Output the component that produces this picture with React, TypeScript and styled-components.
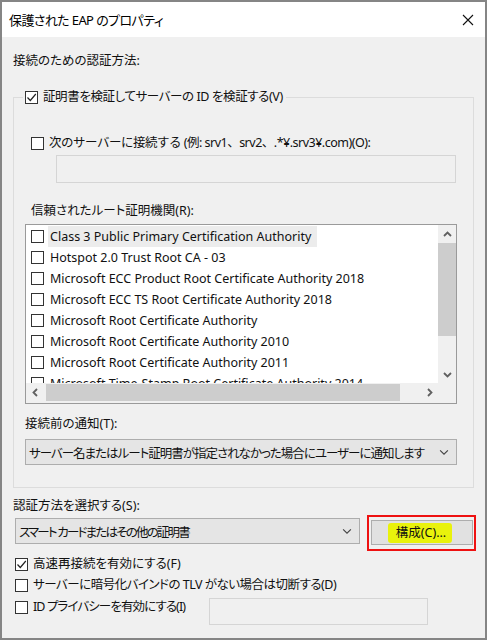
import React from "react";
import styled, { createGlobalStyle } from "styled-components";

const GlobalStyle = createGlobalStyle`
  html, body { margin: 0; padding: 0; background: #f0f0f0; }
  * { box-sizing: border-box; }
  body {
    font-family: "Noto Sans", "Noto Sans CJK JP", sans-serif;
    font-size: 12.5px;
    font-feature-settings: "palt";
    color: #111;
  }
`;

const Window = styled.div`
  width: 487px;
  height: 640px;
  border: 2px solid #858585;
  background: #f0f0f0;
  display: flex;
  flex-direction: column;
`;

const TitleBar = styled.div`
  height: 35px;
  background: #fff;
  display: flex;
  align-items: center;
  justify-content: space-between;
  padding: 0 11px 0 7px;
  font-size: 13px;
  color: #000;
`;

const CloseButton = styled.span`
  display: flex;
  width: 12px;
  height: 12px;
`;

const Text = styled.span<{ $ls?: number; $fullWidth?: boolean }>`
  letter-spacing: ${(p) => p.$ls ?? 0}px;
  white-space: nowrap;
  ${(p) => (p.$fullWidth ? "font-feature-settings: normal;" : "")}
`;

const Body = styled.div`
  flex: 1;
  padding: 0 11px;
  display: flex;
  flex-direction: column;
`;

const Label = styled.div<{ $mt: number; $ml?: number }>`
  line-height: 18px;
  height: 18px;
  margin-top: ${(p) => p.$mt}px;
  margin-left: ${(p) => p.$ml ?? 0}px;
  white-space: nowrap;
`;

const GroupBox = styled.fieldset`
  margin: 18px 0 0 0;
  padding: 0 16px 22px 11px;
  border: 1px solid #dcdcdc;
  min-width: 0;
  display: flex;
  flex-direction: column;
`;

const Legend = styled.legend`
  padding: 0 3px 0 2px;
  margin-left: -2px;
  line-height: 18px;
  height: 18px;
`;

const CheckRow = styled.label<{ $mt?: number; $ml?: number }>`
  display: flex;
  align-items: center;
  gap: 5px;
  line-height: 18px;
  height: 18px;
  margin-top: ${(p) => p.$mt ?? 0}px;
  margin-left: ${(p) => p.$ml ?? 0}px;
  white-space: nowrap;
`;

const Box = styled.span`
  width: 13px;
  height: 13px;
  flex: none;
  border: 1px solid #333;
  background: #fff;
  display: flex;
  align-items: center;
  justify-content: center;
`;

const TextField = styled.div<{ $w: number; $h: number; $mt?: number; $ml?: number }>`
  width: ${(p) => p.$w}px;
  height: ${(p) => p.$h}px;
  margin-top: ${(p) => p.$mt ?? 0}px;
  margin-left: ${(p) => p.$ml ?? 0}px;
  border: 1px solid #d5d5d5;
  background: #f0f0f0;
  flex: none;
`;

const ListBox = styled.div`
  margin-top: 4px;
  height: 180px;
  border: 1px solid #9a9a9a;
  background: #fff;
  display: grid;
  grid-template-columns: 1fr 18px;
  grid-template-rows: 1fr 20px;
  overflow: hidden;
`;

const ListItems = styled.div`
  padding-top: 1px;
  overflow: hidden;
  display: flex;
  flex-direction: column;
`;

const ListRow = styled.div`
  height: 21px;
  display: flex;
  align-items: center;
  padding-left: 5px;
  gap: 4px;
  white-space: nowrap;
  flex: none;
`;

const ItemText = styled.span<{ $focus?: boolean }>`
  padding: 0 2px;
  line-height: 21px;
  background: ${(p) => (p.$focus ? "#ececec" : "transparent")};
  padding-right: ${(p) => (p.$focus ? 6 : 2)}px;
`;

const VScroll = styled.div`
  background: #f0f0f0;
  display: flex;
  flex-direction: column;
  align-items: stretch;
`;

const Arrow = styled.div<{ $size: number }>`
  height: ${(p) => p.$size}px;
  width: ${(p) => p.$size}px;
  display: flex;
  align-items: center;
  justify-content: center;
  flex: none;
`;

const VThumb = styled.div`
  height: 93px;
  background: #cdcdcd;
`;

const Spacer = styled.div`
  flex: 1;
`;

const HScroll = styled.div`
  background: #f0f0f0;
  display: flex;
  align-items: stretch;
`;

const HThumb = styled.div`
  width: 354px;
  margin: 1px 0 2px 2px;
  background: #cdcdcd;
`;

const Corner = styled.div`
  background: #f0f0f0;
`;

const Dropdown = styled.div<{ $w?: number; $h: number; $mt?: number; $ml?: number }>`
  ${(p) => (p.$w ? `width: ${p.$w}px;` : "")}
  height: ${(p) => p.$h}px;
  margin-top: ${(p) => p.$mt ?? 0}px;
  margin-left: ${(p) => p.$ml ?? 0}px;
  border: 1px solid #adadad;
  background: #e5e5e5;
  display: flex;
  align-items: center;
  justify-content: space-between;
  gap: 4px;
  padding: 0 7px 0 3px;
  white-space: nowrap;
  overflow: hidden;
  flex: none;
`;

const MethodRow = styled.div`
  display: flex;
  align-items: flex-start;
  gap: 7px;
  margin-left: 2px;
`;

const RedFrame = styled.div`
  border: 2px solid #ee1111;
  padding: 3px 1px 4px 2px;
`;

const Button = styled.div`
  width: 102px;
  height: 25px;
  border: 1px solid #adadad;
  background: #e1e1e1;
  display: flex;
  align-items: center;
  justify-content: center;
`;

const Marker = styled.span`
  background: #e9f20c;
  padding: 1px 6px 1px 8px;
  margin-right: 4px;
  border-radius: 3px;
  line-height: 18px;
`;

const PrivacyRow = styled.div`
  display: grid;
  grid-template-columns: 194px 219px;
  align-items: start;
  margin-top: 4px;
  margin-left: 2px;
`;

const Check = () => (
  <svg width="11" height="11" viewBox="0 0 11 11">
    <path d="M1.5 5.5 L4.3 8.5 L9.8 2" fill="none" stroke="#222" strokeWidth="1.2" />
  </svg>
);

const CheckBox = ({ checked }: { checked?: boolean }) => <Box>{checked ? <Check /> : null}</Box>;

const Chevron = ({ dir, size = 9, w = 1.6, color = "#555" }: { dir: "up" | "down" | "left" | "right"; size?: number; w?: number; color?: string }) => {
  const paths: Record<string, string> = {
    down: "M1 3 L4.5 6.5 L8 3",
    up: "M1 6 L4.5 2.5 L8 6",
    left: "M6 1 L2.5 4.5 L6 8",
    right: "M3 1 L6.5 4.5 L3 8",
  };
  return (
    <svg width={size} height={size} viewBox="0 0 9 9" style={{ flex: "none" }}>
      <path d={paths[dir]} fill="none" stroke={color} strokeWidth={w} />
    </svg>
  );
};

const certs = [
  "Class 3 Public Primary Certification Authority",
  "Hotspot 2.0 Trust Root CA - 03",
  "Microsoft ECC Product Root Certificate Authority 2018",
  "Microsoft ECC TS Root Certificate Authority 2018",
  "Microsoft Root Certificate Authority",
  "Microsoft Root Certificate Authority 2010",
  "Microsoft Root Certificate Authority 2011",
  "Microsoft Time-Stamp Root Certificate Authority 2014",
];

export default function App() {
  return (
    <>
      <GlobalStyle />
      <Window>
        <TitleBar>
          <Text $ls={-0.6}>保護された EAP のプロパティ</Text>
          <CloseButton>
            <svg width="12" height="12" viewBox="0 0 12 12">
              <path d="M1 1 L11 11 M11 1 L1 11" stroke="#111" strokeWidth="1.1" />
            </svg>
          </CloseButton>
        </TitleBar>
        <Body>
          <Label $mt={15}>接続のための認証方法:</Label>
          <GroupBox>
            <Legend>
              <CheckRow>
                <CheckBox checked />
                <Text $ls={-0.4}>証明書を検証してサーバーの ID を検証する(V)</Text>
              </CheckRow>
            </Legend>
            <CheckRow $mt={28} $ml={6}>
              <CheckBox />
              <Text $ls={-0.5} $fullWidth>次のサーバーに接続する (例: srv1、srv2、.*¥.srv3¥.com)(O):</Text>
            </CheckRow>
            <TextField $w={400} $h={28} $mt={3} $ml={31} />
            <Label $mt={19} $ml={6}>信頼されたルート証明機関(R):</Label>
            <ListBox>
              <ListItems>
                {certs.map((c, i) => (
                  <ListRow key={c}>
                    <CheckBox />
                    <ItemText $focus={i === 0}>{c}</ItemText>
                  </ListRow>
                ))}
              </ListItems>
              <VScroll>
                <Arrow $size={18}>
                  <Chevron dir="up" size={9} w={1.8} color="#606060" />
                </Arrow>
                <VThumb />
                <Spacer />
                <Arrow $size={18}>
                  <Chevron dir="down" size={9} w={1.8} color="#606060" />
                </Arrow>
              </VScroll>
              <HScroll>
                <Arrow $size={18}>
                  <Chevron dir="left" size={9} w={1.8} color="#606060" />
                </Arrow>
                <HThumb />
                <Spacer />
                <Arrow $size={18}>
                  <Chevron dir="right" size={9} w={1.8} color="#606060" />
                </Arrow>
              </HScroll>
              <Corner />
            </ListBox>
            <Label $mt={11}>接続前の通知(T):</Label>
            <Dropdown $h={26} $mt={6}>
              <Text $ls={-1}>サーバー名またはルート証明書が指定されなかった場合にユーザーに通知します</Text>
              <Chevron dir="down" size={10} w={1} color="#444" />
            </Dropdown>
          </GroupBox>
          <Label $mt={9}>認証方法を選択する(S):</Label>
          <MethodRow>
            <Dropdown $w={345} $h={26} $mt={3}>
              <Text $ls={-1.8}>スマート カードまたはその他の証明書</Text>
              <Chevron dir="down" size={10} w={1} color="#444" />
            </Dropdown>
            <RedFrame>
              <Button>
                <Marker>構成(C)...</Marker>
              </Button>
            </RedFrame>
          </MethodRow>
          <CheckRow $mt={4} $ml={2}>
            <CheckBox checked />
            <Text>高速再接続を有効にする(F)</Text>
          </CheckRow>
          <CheckRow $mt={3} $ml={2}>
            <CheckBox />
            <Text $ls={-0.5}>サーバーに暗号化バインドの TLV がない場合は切断する(D)</Text>
          </CheckRow>
          <PrivacyRow>
            <CheckRow>
              <CheckBox />
              <Text $ls={-0.9}>ID プライバシーを有効にする(I)</Text>
            </CheckRow>
            <TextField $w={219} $h={27} />
          </PrivacyRow>
        </Body>
      </Window>
    </>
  );
}
